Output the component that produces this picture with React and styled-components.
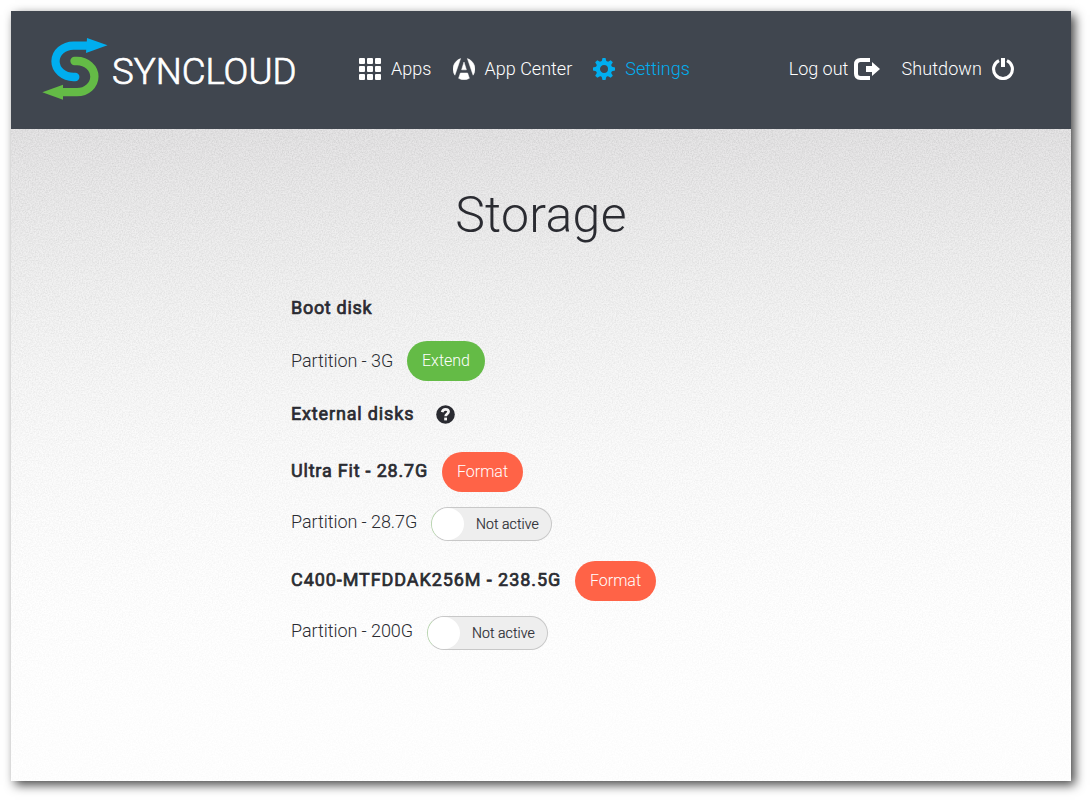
import React from 'react';
import styled, { createGlobalStyle } from 'styled-components';

const noise = `<svg xmlns="http://www.w3.org/2000/svg" width="200" height="200"><filter id="n" x="0" y="0" width="100%" height="100%" color-interpolation-filters="sRGB"><feTurbulence type="fractalNoise" baseFrequency="0.7" numOctaves="3" stitchTiles="stitch"/><feColorMatrix values="0 0 0 0 0.45  0 0 0 0 0.45  0 0 0 0 0.45  0.34 0 0 0 -0.11"/></filter><rect width="200" height="200" filter="url(#n)"/></svg>`;

const Global = createGlobalStyle`
  * { box-sizing: border-box; }
  body { margin: 0; background: #fff; color: #2a2b31; font: 300 18px/24px Roboto, sans-serif; }
`;

const Window = styled.div`
  width: 1060px;
  height: 770px;
  margin: 11px 0 0 11px;
  display: flex;
  flex-direction: column;
  box-shadow: 4px 4px 10px rgba(0, 0, 0, 0.72);
`;
const Page = styled.div`
  height: 800px;
  display: flow-root;
  overflow: hidden;
`;
const Header = styled.header`
  height: 118px;
  flex: none;
  background: #40464f;
  color: #fff;
  display: flex;
  align-items: flex-start;
  padding: 0 57px 0 31px;
`;
const Logo = styled.a`
  display: block;
  width: 256px;
  height: 64px;
  margin-top: 26px;
  svg { display: block; }
`;
const Nav = styled.nav`
  display: flex;
  gap: ${p => p.$gap}px;
  margin-top: 46px;
  margin-left: ${p => p.$left || 0};
`;
const NavItem = styled.a`
  display: flex;
  align-items: center;
  gap: ${p => p.$gap}px;
  height: 24px;
  white-space: nowrap;
  letter-spacing: ${p => p.$spacing || 0}px;
  color: ${p => (p.$active ? '#00aeef' : '#fff')};
  svg { display: block; flex: none; }
`;
const Main = styled.main`
  flex: 1;
  padding: 54px 0 0 280px;
  background:
    linear-gradient(rgba(255, 255, 255, 0), rgba(255, 255, 255, 0.8) 90%),
    url("data:image/svg+xml,${encodeURIComponent(noise)}"),
    linear-gradient(#e6e5e6, #efefef 25%, #f9f9f9 50%, #fff 75%);
`;
const Title = styled.h1`
  margin: 0 0 0 -280px;
  height: 64px;
  text-align: center;
  font-size: 50px;
  font-weight: 300;
  line-height: 64px;
  letter-spacing: 0.3px;
`;
const Row = styled.div`
  display: flex;
  align-items: flex-start;
  margin-top: ${p => p.$top}px;
  height: ${p => p.$height || 24}px;
`;
const Label = styled.span`
  margin-top: ${p => p.$top || 0}px;
  width: ${p => p.$width}px;
  flex: none;
  white-space: nowrap;
  letter-spacing: -0.06px;
`;
const Strong = styled(Label)`
  font-weight: 400;
  -webkit-text-stroke: 0.7px currentColor;
  letter-spacing: ${p => p.$spacing || 0.8}px;
`;
const Button = styled.button`
  width: ${p => p.$width}px;
  height: 40px;
  border: 0;
  padding: 0;
  border-radius: 20px;
  background: ${p => (p.$danger ? '#ff6347' : '#64bb46')};
  color: #fff;
  font: 300 16px/40px Roboto, sans-serif;
`;
const Toggle = styled.div`
  display: flex;
  align-items: center;
  gap: 12px;
  width: 121px;
  height: 34px;
  border: 1px solid #c8c8c8;
  border-left-color: #b9d5b0;
  border-radius: 17px;
  background: #eee;
  font-size: 14px;
  font-weight: 300;
  letter-spacing: 0.08px;
  -webkit-text-stroke: 0.2px currentColor;
`;
const Knob = styled.i`
  width: 32px;
  height: 32px;
  border-radius: 50%;
  background: #fff;
`;

const LogoArt = () => (
  <svg width="256" height="64" viewBox="42 37 256 64">
    <g fill="none" strokeLinecap="round" strokeWidth="8.3">
      <path d="M87 45.6H73.5A18 15.7 0 0 0 73.5 77H75.3" stroke="#00aeef" />
      <path d="M74.5 61H77A17.4 15.6 0 0 1 77 92.2H63" stroke="#64bb46" />
    </g>
    <path d="M87 38L107.5 45.3L86 53Z" fill="#00aeef" />
    <path d="M63 84.7V99.7L42.3 92.3Z" fill="#64bb46" />
    <text x="112" y="83.5" fill="#fff" stroke="#fff" strokeWidth="0.7" fontFamily="Roboto, sans-serif" fontWeight="300" fontSize="37" textLength="184.5" lengthAdjust="spacingAndGlyphs">SYNCLOUD</text>
  </svg>
);
const GridIcon = () => (
  <svg width="22" height="22" fill="#fff">
    {[0, 8, 16].map(y => [0, 8, 16].map(x => <rect key={`${x}-${y}`} x={x} y={y} width="6" height="6" rx="1" />))}
  </svg>
);
const CenterIcon = () => (
  <svg width="22" height="22" viewBox="0 0 22 22" fill="#fff">
    <path d="M7.6.6L1.9 17.2A11 11 0 0 1 7.6.6ZM14.4.6L20.1 17.2A11 11 0 0 0 14.4.6ZM11 4L13.4 11.8H8.6ZM7.4 15H14.6L16.4 20.3A11 11 0 0 1 5.6 20.3Z" stroke="#fff" strokeWidth="0.5" />
  </svg>
);
const GearIcon = () => (
  <svg width="22" height="22" viewBox="0 0 22 22">
    <g fill="#00aeef">
      {[0, 45, 90, 135, 180, 225, 270, 315].map(a => <path key={a} d="M8.5 4L9.5 0H12.5L13.5 4Z" transform={`rotate(${a} 11 11)`} />)}
    </g>
    <circle cx="11" cy="11" r="6.1" fill="none" stroke="#00aeef" strokeWidth="4.2" />
  </svg>
);
const LogoutIcon = () => (
  <svg width="26" height="22" viewBox="0 0 26 22">
    <path d="M16 2H6.5Q2 2 2 6.5V15.5Q2 20 6.5 20H16" fill="none" stroke="#fff" strokeWidth="4" />
    <path d="M12 8H18V4L26 11L18 18V14H12Z" fill="#fff" />
  </svg>
);
const PowerIcon = () => (
  <svg width="22" height="22" viewBox="0 0 22 22" fill="none" stroke="#fff">
    <path d="M7 2.6A9.4 9.4 0 1 0 15 2.6" strokeWidth="3.1" />
    <path d="M11 0V9" strokeWidth="4" />
  </svg>
);
const HelpIcon = () => (
  <svg width="19" height="19" viewBox="0 0 19 19">
    <circle cx="9.5" cy="9.5" r="9.3" fill="#2a2b31" />
    <path d="M6.1 7.1C6.6 5.2 7.8 4.3 9.5 4.3C11.4 4.3 12.6 5.3 12.6 6.8C12.6 8.9 9.6 8.7 9.6 11.3" fill="none" stroke="#f5f5f5" strokeWidth="2.7" />
    <rect x="8.2" y="12.6" width="2.8" height="2.8" fill="#f5f5f5" />
  </svg>
);
const Switch = () => <Toggle><Knob /><span>Not active</span></Toggle>;

export default function App() {
  return (
    <Page>
      <Global />
      <Window>
        <Header>
          <Logo><LogoArt /></Logo>
          <Nav $gap={21} $left="61px">
            <NavItem $gap={10} $spacing={0.05}><GridIcon />Apps</NavItem>
            <NavItem $gap={10}><CenterIcon />App Center</NavItem>
            <NavItem $gap={10} $active><GearIcon />Settings</NavItem>
          </Nav>
          <Nav $gap={21} $left="auto">
            <NavItem $gap={6}>Log out<LogoutIcon /></NavItem>
            <NavItem $gap={10} $spacing={0.1}>Shutdown<PowerIcon /></NavItem>
          </Nav>
        </Header>
        <Main>
          <Title>Storage</Title>
          <Row $top={49}><Strong $spacing={0.7}>Boot disk</Strong></Row>
          <Row $top={21} $height={40}>
            <Label $top={8} $width={116}>Partition - 3G</Label>
            <Button $width={78}>Extend</Button>
          </Row>
          <Row $top={21}>
            <Strong $width={145} $spacing={0.84}>External disks</Strong>
            <Label $top={3}><HelpIcon /></Label>
          </Row>
          <Row $top={26} $height={40}>
            <Strong $top={7} $width={151}>Ultra Fit - 28.7G</Strong>
            <Button $width={81} $danger>Format</Button>
          </Row>
          <Row $top={15} $height={34}>
            <Label $top={3} $width={140}>Partition - 28.7G</Label>
            <Switch />
          </Row>
          <Row $top={20} $height={40}>
            <Strong $top={7} $width={284} $spacing={0.92}>C400-MTFDDAK256M - 238.5G</Strong>
            <Button $width={81} $danger>Format</Button>
          </Row>
          <Row $top={15} $height={34}>
            <Label $top={3} $width={136}>Partition - 200G</Label>
            <Switch />
          </Row>
        </Main>
      </Window>
    </Page>
  );
}
